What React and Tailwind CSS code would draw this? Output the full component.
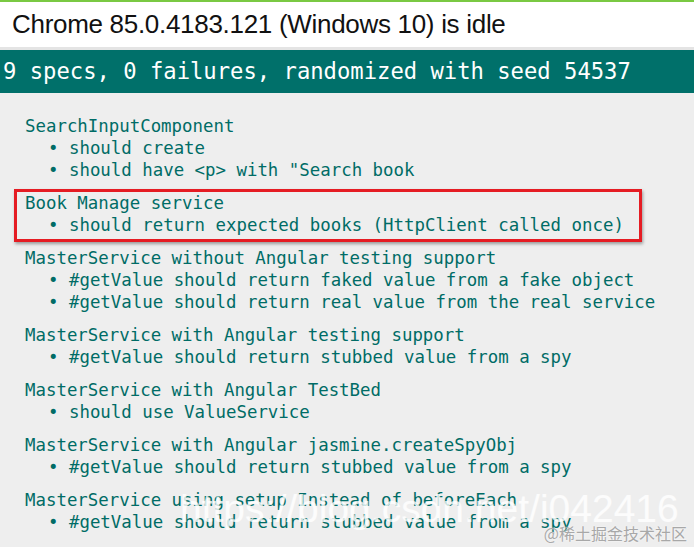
export default function App() {
  // spec groups as listed by the jasmine html reporter
  const suites = [
    {
      title: 'SearchInputComponent',
      specs: ['should create', 'should have <p> with "Search book'],
    },
    {
      title: 'Book Manage service',
      specs: ['should return expected books (HttpClient called once)'],
      marked: true,
    },
    {
      title: 'MasterService without Angular testing support',
      specs: [
        '#getValue should return faked value from a fake object',
        '#getValue should return real value from the real service',
      ],
    },
    {
      title: 'MasterService with Angular testing support',
      specs: ['#getValue should return stubbed value from a spy'],
    },
    {
      title: 'MasterService with Angular TestBed',
      specs: ['should use ValueService'],
    },
    {
      title: 'MasterService with Angular jasmine.createSpyObj',
      specs: ['#getValue should return stubbed value from a spy'],
    },
    {
      title: 'MasterService using setup Instead of beforeEach',
      specs: ['#getValue should return stubbed value from a spy'],
    },
  ];

  return (
    <div className="relative w-[694px] h-[547px] overflow-hidden bg-[#eeeeee]">
      <div className="h-[2px] bg-[#7ac943]"></div>
      <div className="h-[45px] bg-white flex items-center pl-[12px] text-[26px] text-[#111] font-['Liberation_Sans',Arial,sans-serif] tracking-[-0.3px]">
        Chrome 85.0.4183.121 (Windows 10) is idle
      </div>
      <div className="h-[3px] bg-[#e4e4e4]"></div>
      <div className="h-[43px] bg-[#00706a] flex items-center pl-[3px] text-[22.2px] text-white font-['DejaVu_Sans_Mono',monospace]">
        9 specs, 0 failures, randomized with seed 54537
      </div>

      <div className="flex flex-col gap-[11px] pt-[22px] pl-[25px] text-[17.4px] leading-[22px] text-[#006c66] font-['DejaVu_Sans_Mono',monospace] whitespace-pre">
        {suites.map((s) => (
          <div key={s.title} className="relative">
            {s.marked && (
              <div className="absolute left-[-11px] top-[-3px] w-[628px] h-[53px] border-[3px] border-[#e51c23] shadow-[1px_2px_3px_rgba(0,0,0,0.35)]"></div>
            )}
            <div>{s.title}</div>
            {s.specs.map((t, i) => (
              <div key={i} className="pl-[23px]">
                {'• ' + t}
              </div>
            ))}
          </div>
        ))}
      </div>

      {/* watermarks */}
      <div className="absolute left-[180px] top-[489px] text-[39px] leading-none text-white/80 font-['Liberation_Sans',Arial,sans-serif] whitespace-nowrap">
        https://blog.csdn.net/i042416
      </div>
      <div className="absolute right-[7px] top-[525px] text-[16px] leading-none text-[#a8a8a8] font-['Noto_Sans_CJK_SC',sans-serif] whitespace-nowrap [text-shadow:0_0_2px_#fff]">
        @稀土掘金技术社区
      </div>
    </div>
  );
}
